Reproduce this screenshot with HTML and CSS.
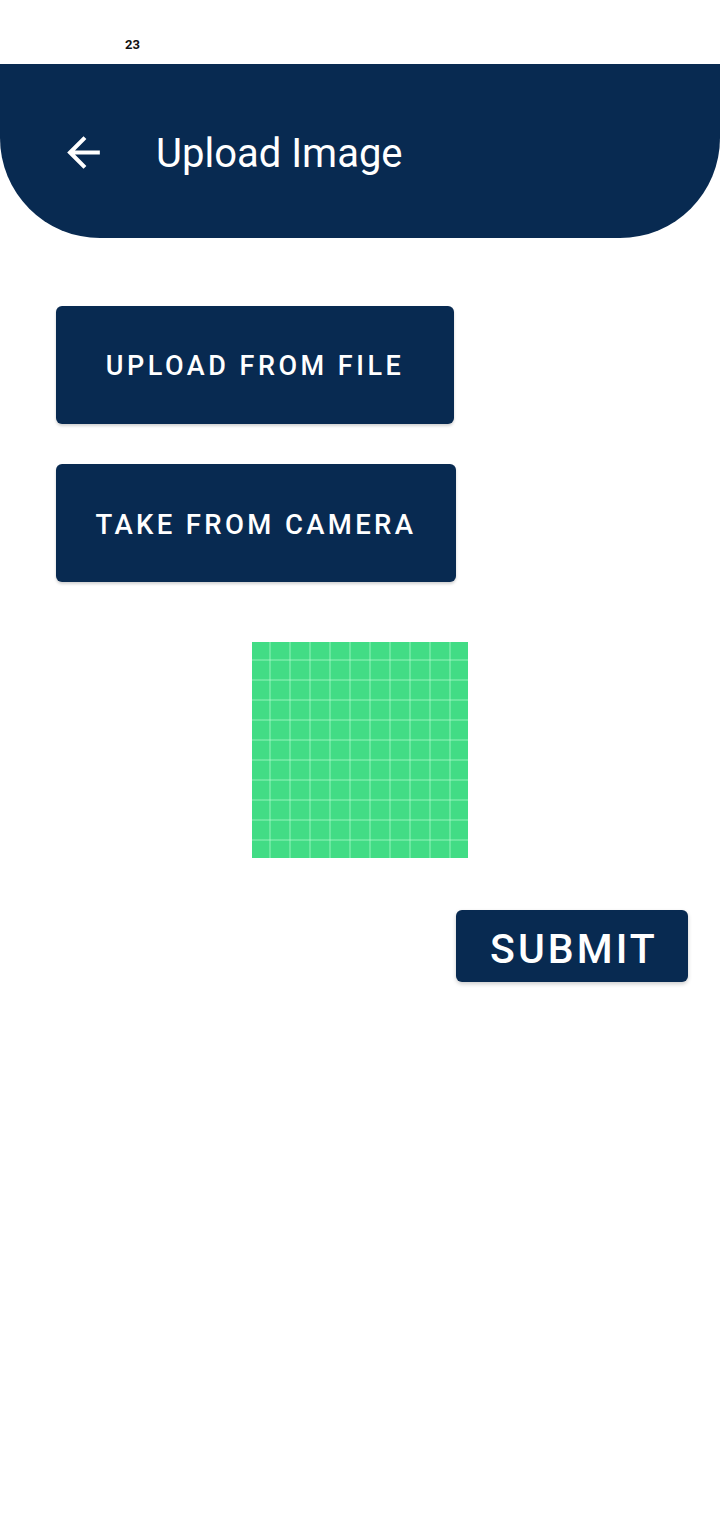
FILE: index.html
```html
<!DOCTYPE html>
<html lang="en">
<head>
<meta charset="utf-8">
<title>Upload Image</title>
<link rel="stylesheet" href="styles.css">
</head>
<body>
<div class="screen">
  <div class="status-bar"><span class="clock">23</span></div>
  <header class="app-bar">
    <svg class="back-icon" viewBox="0 0 24 24" aria-hidden="true">
      <path d="M20 11H7.83l5.59-5.59L12 4l-8 8 8 8 1.41-1.41L7.83 13H20v-2z" fill="#ffffff"/>
    </svg>
    <h1 class="title">Upload Image</h1>
  </header>
  <main class="content">
    <button class="btn btn-file">UPLOAD FROM FILE</button>
    <button class="btn btn-camera">TAKE FROM CAMERA</button>
    <div class="preview-row"><div class="preview"></div></div>
    <div class="submit-row"><button class="btn-submit">SUBMIT</button></div>
  </main>
</div>
</body>
</html>
```
FILE: styles.css
```css
html, body {
  margin: 0;
  padding: 0;
  background: #ffffff;
}
body {
  font-family: Roboto, "Noto Sans", sans-serif;
  width: 720px;
  height: 1520px;
  overflow: hidden;
}
.screen {
  display: flex;
  flex-direction: column;
}
.status-bar {
  height: 64px;
  display: flex;
  align-items: center;
  padding-left: 125px;
  box-sizing: border-box;
  padding-top: 24px;
  padding-bottom: 0;
}
.clock {
  font-size: 13px;
  font-weight: 700;
  color: #111;
  line-height: 1;
}
.app-bar {
  height: 174px;
  background: #082a51;
  border-radius: 0 0 100px 100px;
  display: flex;
  align-items: center;
  box-sizing: border-box;
  padding-left: 59px;
}
.back-icon {
  width: 49px;
  height: 49px;
  display: block;
  margin-top: 2px;
}
.title {
  margin: 0 0 0 48px;
  font-size: 40px;
  font-weight: 400;
  color: #ffffff;
  line-height: 1;
  padding-top: 6px;
}
.content {
  display: flex;
  flex-direction: column;
  align-items: flex-start;
  padding: 68px 32px 0 56px;
}
.btn {
  height: 118px;
  border: none;
  border-radius: 6px;
  background: #082a51;
  color: #ffffff;
  font-family: Roboto, "Noto Sans", sans-serif;
  font-weight: 500;
  font-size: 27px;
  padding: 2px 0 0 0;
  box-shadow: 0 2px 3px rgba(0,0,0,0.18);
  display: flex;
  align-items: center;
  justify-content: center;
}
.btn-file {
  width: 398px;
  letter-spacing: 0.13em;
}
.btn-camera {
  width: 400px;
  margin-top: 40px;
  font-size: 27.5px;
  letter-spacing: 0.122em;
}
.preview-row {
  align-self: stretch;
  display: flex;
  justify-content: center;
  margin-top: 60px;
  margin-left: -56px;
  margin-right: -32px;
}
.preview {
  width: 216px;
  height: 216px;
  background-color: #42dc85;
  background-image:
    linear-gradient(to right, rgba(200,255,220,0.3) 2px, transparent 2px),
    linear-gradient(to bottom, rgba(200,255,220,0.3) 2px, transparent 2px);
  background-size: 20px 20px;
  background-position: 17px 17px;
}
.submit-row {
  align-self: stretch;
  display: flex;
  justify-content: flex-end;
  margin-top: 52px;
}
.btn-submit {
  width: 232px;
  height: 72px;
  border: none;
  border-radius: 6px;
  background: #082a51;
  color: #ffffff;
  font-family: Roboto, "Noto Sans", sans-serif;
  font-weight: 500;
  font-size: 41px;
  letter-spacing: 0.075em;
  padding: 5px 0 0 4px;
  box-shadow: 0 2px 4px rgba(0,0,0,0.2);
  display: flex;
  align-items: center;
  justify-content: center;
}
```
